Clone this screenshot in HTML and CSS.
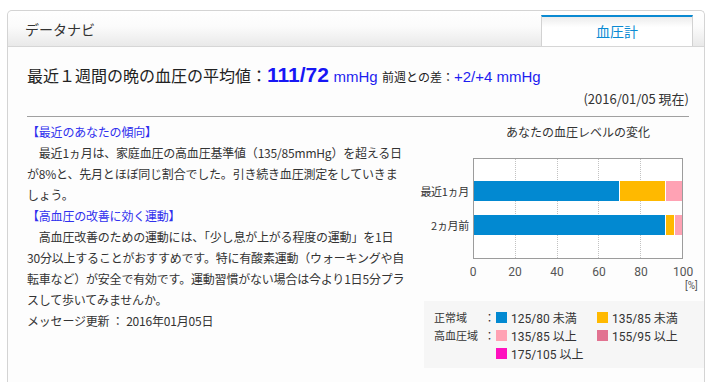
FILE: index.html
```html
<!DOCTYPE html>
<html lang="ja">
<head>
<meta charset="utf-8">
<title>データナビ 血圧計</title>
<link rel="stylesheet" href="styles.css">
</head>
<body>
<div class="frame">
  <div class="tabbar">
    <div class="brand">データナビ</div>
    <div class="tab">血圧計</div>
  </div>
  <div class="content">
    <div class="summary">
      <div class="headline">最近１週間の晩の血圧の平均値：<span class="avg">111/72</span> <span class="unit">mmHg</span> <span class="diff-label">前週との差：</span><span class="diff">+2/+4 mmHg</span></div>
      <div class="asof">(2016/01/05 現在)</div>
    </div>
    <div class="body">
      <div class="message">
        <p class="heading">【最近のあなたの傾向】</p>
        <p>　最近1ヵ月は、家庭血圧の高血圧基準値（135/85mmHg）を超える日<br>が8%と、先月とほぼ同じ割合でした。引き続き血圧測定をしていきま<br>しょう。</p>
        <p class="heading">【高血圧の改善に効く運動】</p>
        <p>　高血圧改善のための運動には、「少し息が上がる程度の運動」を1日<br>30分以上することがおすすめです。特に有酸素運動（ウォーキングや自<br>転車など）が安全で有効です。運動習慣がない場合は今より1日5分プラ<br>スして歩いてみませんか。</p>
        <p>メッセージ更新 ： 2016年01月05日</p>
      </div>
      <div class="chart">
        <div class="chart-title">あなたの血圧レベルの変化</div>
        <div class="chart-main">
          <div class="labels">
            <div>最近1ヵ月</div>
            <div>2ヵ月前</div>
          </div>
          <div class="plot">
            <div class="grid"><i></i><i></i><i></i><i></i><i></i></div>
            <div class="bar">
              <span class="seg c-normal" style="width:70%"></span>
              <span class="seg c-normal2" style="width:22.5%"></span>
              <span class="seg c-high1" style="width:7.5%"></span>
            </div>
            <div class="bar">
              <span class="seg c-normal" style="width:92.3%"></span>
              <span class="seg c-normal2" style="width:4.3%"></span>
              <span class="seg c-high1" style="width:3.4%"></span>
            </div>
          </div>
        </div>
        <div class="ticks">
          <span><b>0</b></span><span><b>20</b></span><span><b>40</b></span><span><b>60</b></span><span><b>80</b></span><span><b>100</b></span>
        </div>
        <div class="pct">[%]</div>
        <div class="legend">
          <span class="lg-label">正常域</span><span class="lg-colon">：</span>
          <span class="lg-item"><i class="sw c-normal"></i>125/80 未満</span>
          <span class="lg-item"><i class="sw c-normal2"></i>135/85 未満</span>
          <span class="lg-label">高血圧域</span><span class="lg-colon">：</span>
          <span class="lg-item"><i class="sw c-high1"></i>135/85 以上</span>
          <span class="lg-item"><i class="sw c-high2"></i>155/95 以上</span>
          <span class="lg-label"></span><span class="lg-colon"></span>
          <span class="lg-item"><i class="sw c-high3"></i>175/105 以上</span>
        </div>
      </div>
    </div>
  </div>
</div>
</body>
</html>
```

FILE: styles.css
```css
* { box-sizing: border-box; }

html, body {
  margin: 0;
  padding: 0;
  background: #ffffff;
}

body {
  font-family: "Noto Sans CJK JP", sans-serif;
  color: #333333;
  font-size: 12px;
}

.frame {
  margin: 10px 0 0 7px;
  width: 698px;
  min-height: 380px;
  border: 1px solid #d4d4d4;
  border-bottom: none;
  border-radius: 5px 5px 0 0;
  background: #fdfdfd;
}

.tabbar {
  height: 36px;
  display: flex;
  justify-content: space-between;
  align-items: flex-end;
  border-bottom: 1px solid #d6d6d6;
  border-radius: 5px 5px 0 0;
  background: linear-gradient(#ffffff 0%, #fbfbfb 45%, #e9e9e9 100%);
}

.brand {
  align-self: center;
  margin-left: 17px;
  font-size: 14px;
  line-height: 20px;
  color: #333333;
}

.tab {
  width: 152px;
  height: 31px;
  margin-right: 11px;
  border-top: 2px solid #0a8ad2;
  border-left: 1px solid #d2d2d2;
  border-right: 1px solid #d2d2d2;
  background: linear-gradient(#ececec 0%, #ffffff 35%, #ffffff 100%);
  color: #0a8ad2;
  font-size: 14px;
  line-height: 28px;
  text-align: center;
}

.content {
  padding-left: 19px;
}

.summary {
  margin-right: 15px;
  padding-top: 16px;
  padding-bottom: 8px;
  border-bottom: 1px solid #a0a0a0;
}

.headline {
  font-family: "Liberation Sans", "Noto Sans CJK JP", sans-serif;
  font-size: 16px;
  line-height: 24px;
  height: 24px;
  color: #222222;
  white-space: nowrap;
}

.avg {
  font-size: 21px;
  font-weight: bold;
  color: #1717f5;
}

.unit {
  font-size: 15px;
  color: #1d1df0;
}

.diff-label {
  font-size: 12px;
  color: #222222;
}

.diff {
  font-size: 15px;
  color: #1d1df0;
}

.asof {
  margin-top: 3px;
  font-size: 13px;
  line-height: 18px;
  text-align: right;
  color: #333333;
}

.body {
  display: flex;
  gap: 7px;
}

.message {
  width: 390px;
  padding-top: 4px;
  font-size: 12px;
  line-height: 21px;
  letter-spacing: -0.2px;
  color: #333333;
}

.message p {
  margin: 0;
}

.message .heading {
  color: #3030ee;
}

.chart {
  width: 280px;
  padding-top: 4px;
}

.chart-title {
  margin-left: 49px;
  width: 210px;
  text-align: center;
  font-size: 12px;
  line-height: 21px;
  color: #333333;
}

.chart-main {
  display: flex;
  margin-top: 16px;
}

.labels {
  width: 49px;
  padding-right: 4px;
  padding-top: 23px;
  display: flex;
  flex-direction: column;
  gap: 14px;
  font-size: 11px;
  color: #333333;
}

.labels div {
  height: 20px;
  line-height: 20px;
  display: flex;
  justify-content: flex-end;
  white-space: nowrap;
  letter-spacing: -0.3px;
}

.plot {
  position: relative;
  width: 210px;
  height: 101px;
  border: 1px solid #9c9c9c;
  padding-top: 22px;
  display: flex;
  flex-direction: column;
  gap: 14px;
  background: #ffffff;
}

.grid {
  position: absolute;
  inset: 0;
  display: flex;
}

.grid i {
  flex: 1;
  border-right: 1px dotted #c2c2c2;
}

.grid i:last-child {
  border-right: none;
}

.bar {
  position: relative;
  height: 20px;
  display: flex;
}

.seg {
  height: 100%;
  border-right: 1px solid #ffffff;
}

.seg:last-child {
  border-right: none;
}

.c-normal { background: #0289d1; }
.c-normal2 { background: #ffb900; }
.c-high1 { background: #ffa2b4; }
.c-high2 { background: #e27391; }
.c-high3 { background: #ff10be; }

.ticks {
  margin-left: 49px;
  width: 210px;
  margin-top: 5px;
  display: flex;
  justify-content: space-between;
  font-family: Roboto, "DejaVu Sans", sans-serif;
  font-size: 12px;
  line-height: 16px;
  color: #555555;
}

.ticks span {
  width: 0;
  display: flex;
  justify-content: center;
}

.ticks b {
  font-weight: normal;
  white-space: nowrap;
}

.pct {
  margin-left: 261px;
  margin-top: 0;
  font-family: Roboto, "DejaVu Sans", sans-serif;
  font-size: 10px;
  line-height: 11px;
  color: #555555;
}

.legend {
  margin-top: 10px;
  width: 280px;
  padding: 7px 0 6px 10px;
  background: #f6f6f6;
  display: grid;
  grid-template-columns: 50px 12px 101px auto;
  grid-auto-rows: 18px;
  align-items: center;
  font-size: 12px;
  color: #333333;
}

.lg-label {
  font-size: 11px;
}

.lg-colon {
  font-size: 11px;
}

.lg-item {
  display: flex;
  align-items: center;
  gap: 4px;
  font-family: Roboto, "Noto Sans CJK JP", sans-serif;
  white-space: nowrap;
}

.sw {
  display: block;
  width: 11px;
  height: 11px;
}
```
